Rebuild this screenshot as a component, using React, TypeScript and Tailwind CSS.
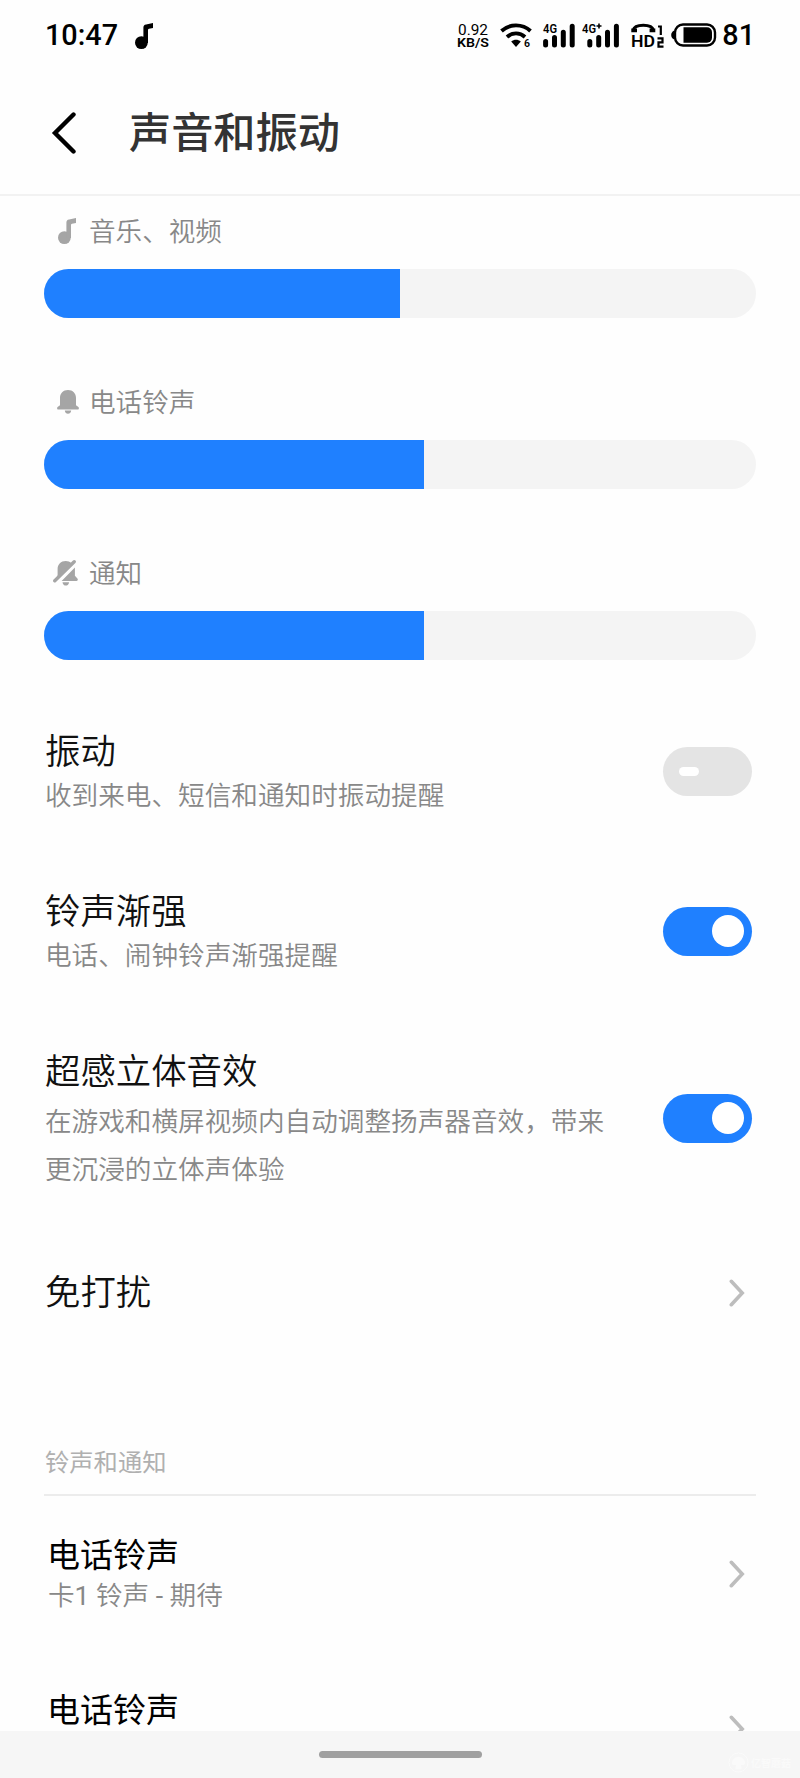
import React from "react";

const NoteIcon: React.FC<{ className?: string }> = ({ className }) => (
  <svg viewBox="0 0 18 26" className={className} fill="currentColor">
    <circle cx="6.4" cy="19.6" r="6.4" />
    <path d="M8.400 20V4.600c0-2 .8-2.900 2.700-3.200L18 0v5l-4 .8c-.7.2-1 .5-1 1.200V20z" />
  </svg>
);

const BellIcon = () => (
  <svg viewBox="0 0 22 24" className="ml-[3px] h-6 w-[22px]" fill="currentColor">
    <path d="M11 0c4.800 0 8 3.400 8 8v7.200l2.400 1.800c.9.900.5 2.400-.7 2.400H1.300c-1.200 0-1.600-1.500-.7-2.400L3 15.200V8c0-4.600 3.200-8 8-8z" />
    <path d="M7.800 20.600h6.400c-.3 2.100-1.600 3.200-3.200 3.200s-2.900-1.100-3.200-3.200z" />
  </svg>
);

const BellOffIcon = () => (
  <svg viewBox="0 0 25 26" className="-ml-[2px] h-[26px] w-[25px]" fill="currentColor">
    <path d="M18.500 3.200C17 1.800 15 1 12.700 1 8 1 4.600 4.300 4.600 9v6.500L3 19z" />
    <path d="M21.900 7.500v8.300l2.500 2.600c.8.900.4 2.600-.8 2.600H8.600z" />
    <path d="M9.500 22.200h6.600c-.3 2.200-1.700 3.400-3.300 3.400s-3-1.200-3.300-3.400z" />
    <path d="M1.800 20.800 21.200 1.800" stroke="currentColor" strokeWidth="3.400" strokeLinecap="round" />
  </svg>
);

const Chevron = () => (
  <svg viewBox="0 0 16 28" className="mr-[11px] h-7 w-4 shrink-0" fill="none">
    <path d="M2.300 2.300 13.200 14 2.300 25.700" stroke="#bdbdbd" strokeWidth="3.600" strokeLinecap="round" />
  </svg>
);

const SignalBars = () => (
  <path
    d="M2.600 19.500V23M11.500 15.500V23M20.300 10.300V23M29.200 4.200V23"
    stroke="#000"
    strokeWidth="5"
    strokeLinecap="round"
  />
);

const StatusBar = () => (
  <div className="flex h-[70px] shrink-0 items-center pl-[45px] pr-[45px] font-[Roboto] text-black">
    <span className="text-[28.8px] font-medium leading-none">10:47</span>
    <NoteIcon className="ml-[17px] mt-[2px] h-[26px] w-[18px]" />
    <div className="ml-auto flex items-center">
      <svg viewBox="0 0 32 26" className="h-[26px] w-8 overflow-visible font-[Roboto]">
        <text x="1" y="13" fontSize="15.500" textLength="30" lengthAdjust="spacingAndGlyphs">0.92</text>
        <text x="0" y="25" fontSize="12.500" fontWeight="600" textLength="32" lengthAdjust="spacingAndGlyphs">KB/S</text>
      </svg>
      <svg viewBox="0 0 32 26" className="ml-[11px] h-[26px] w-8 overflow-visible" fill="none">
        <path d="M1.500 9C9.500 1.500 22.500 1.500 30.500 9" stroke="#000" strokeWidth="3.800" />
        <path d="M7 15c5.200-4.800 12.800-4.800 18 0" stroke="#000" strokeWidth="3.800" />
        <path d="M11.200 19.600c2.900-2.400 6.700-2.400 9.600 0L16 25z" fill="#000" />
        <text x="24" y="25" fontFamily="Roboto" fontSize="10.500" fontWeight="600" fill="#000">6</text>
      </svg>
      <svg viewBox="0 0 33 26" className="ml-[11px] h-[26px] w-[33px] overflow-visible">
        <text x="0" y="10.500" fontFamily="Roboto" fontSize="12" fontWeight="600" textLength="14" lengthAdjust="spacingAndGlyphs">4G</text>
        <SignalBars />
      </svg>
      <svg viewBox="0 0 37 26" className="ml-[6px] h-[26px] w-[37px] overflow-visible">
        <text x="0" y="10.500" fontFamily="Roboto" fontSize="12" fontWeight="600" textLength="14" lengthAdjust="spacingAndGlyphs">4G</text>
        <path d="M14.500 4h5M17 1.500v5" stroke="#000" strokeWidth="1.600" />
        <g transform="translate(5.200 0)">
          <SignalBars />
        </g>
      </svg>
      <svg viewBox="0 0 33 26" className="ml-3 h-[26px] w-[33px] overflow-visible">
        <path d="M2.300 8C3 4.300 7 3.200 12.300 3.200S21.600 4.300 22.300 8" fill="none" stroke="#000" strokeWidth="3" />
        <path d="M.3 6.500h5.700v3.800H.3zM18.600 6.500h5.700v3.800h-5.700z" />
        <text x="0" y="25" fontFamily="Roboto" fontSize="16.500" fontWeight="600" textLength="24" lengthAdjust="spacingAndGlyphs">HD</text>
        <path d="M27 4.500h2.800V13M26.500 16.300h5v4h-4v4.300h5" fill="none" stroke="#000" strokeWidth="2.200" />
      </svg>
      <svg viewBox="0 0 46 24" className="ml-[7px] h-6 w-[46px]">
        <rect x="4" y="1.500" width="40" height="21" rx="8" fill="none" stroke="#000" strokeWidth="2.400" />
        <path d="M3.200 7.500v9C1.200 15.500.2 14 .2 12s1-3.500 3-4.500z" />
        <path d="M12.500 4.300H36a5 5 0 0 1 5 5v5.400a5 5 0 0 1-5 5H12.500z" />
      </svg>
      <span className="ml-[5px] text-[28.8px] font-medium leading-none">81</span>
    </div>
  </div>
);

type VolumeProps = { icon: React.ReactNode; label: string; value: number };

const Volume: React.FC<VolumeProps> = ({ icon, label, value }) => (
  <div className="mb-16">
    <div className="flex h-9 items-center">
      <span className="flex w-[45px] justify-center pt-1 text-[#a5a5a5]">{icon}</span>
      <span className="pt-[2px] text-[26.600px] font-[350] leading-9 text-[#888]">{label}</span>
    </div>
    <div className="mt-[22px] h-[49px] overflow-hidden rounded-full bg-[#f4f4f4]">
      <div className="h-full bg-[#1f80ff]" style={{ width: value }} />
    </div>
  </div>
);

const Toggle: React.FC<{ on: boolean }> = ({ on }) =>
  on ? (
    <div className="mr-1 flex h-[49px] w-[89px] shrink-0 items-center justify-end rounded-full bg-[#1f80ff] pr-2">
      <div className="size-8 rounded-full bg-white" />
    </div>
  ) : (
    <div className="mr-1 flex h-[49px] w-[89px] shrink-0 items-center rounded-full bg-[#e4e4e4] pl-4">
      <div className="h-[9px] w-5 rounded-full bg-white" />
    </div>
  );

type SwitchRowProps = { title: string; lines: string[]; on: boolean };

const SwitchRow: React.FC<SwitchRowProps> = ({ title, lines, on }) => (
  <div className={`flex items-center justify-between pl-px ${lines.length > 1 ? "h-[214px]" : "h-[160px]"}`}>
    <div className={lines.length > 1 ? "pt-[2px]" : "pb-1"}>
      <p className="mb-[5px] text-[35.400px] font-[350] leading-[44px] text-[#111]">{title}</p>
      {lines.map((line) => (
        <p
          key={line}
          className={`whitespace-nowrap text-[26.640px] font-[350] text-[#888] ${lines.length > 1 ? "leading-[48px]" : "leading-9"}`}
        >
          {line}
        </p>
      ))}
    </div>
    <Toggle on={on} />
  </div>
);

const RingtoneRow: React.FC<{ title: string; detail?: React.ReactNode }> = ({ title, detail }) => (
  <div className="flex h-[155px] shrink-0 items-center justify-between pl-[3px]">
    <div className="h-[86px]">
      <p className="text-[33px] leading-[44px] text-black">{title}</p>
      {detail && (
        <p className="ml-px mt-[3px] h-9 font-[Roboto,'Noto_Sans_CJK_SC',sans-serif] text-[26.600px] font-[350] leading-9 text-[#888]">
          {detail}
        </p>
      )}
    </div>
    <Chevron />
  </div>
);

export default function App() {
  return (
    <div
      lang="zh-CN"
      className="flex h-[1778px] w-[800px] flex-col overflow-hidden bg-[#fefefe] font-['Noto_Sans_CJK_SC',sans-serif]"
    >
      <StatusBar />
      <header className="flex h-[126px] shrink-0 items-center border-b-2 border-[#f2f2f2] pl-[51px]">
        <svg viewBox="0 0 26 42" className="mt-[2px] h-[42px] w-[26px]" fill="none">
          <path d="M22.500 2.500 4 21l18.500 18.500" stroke="#000" strokeWidth="4.400" strokeLinecap="round" />
        </svg>
        <h1 className="ml-[52px] pb-1 text-[42.200px] font-medium leading-[60px] text-[#333]">声音和振动</h1>
      </header>

      <main className="flex min-h-0 flex-1 flex-col overflow-hidden px-11 pt-[15px]">
        <section className="shrink-0">
          <Volume icon={<NoteIcon className="h-[26px] w-[18px]" />} label="音乐、视频" value={356} />
          <Volume icon={<BellIcon />} label="电话铃声" value={380} />
          <Volume icon={<BellOffIcon />} label="通知" value={380} />
        </section>

        <section className="-mt-[33px] shrink-0">
          <SwitchRow title="振动" lines={["收到来电、短信和通知时振动提醒"]} on={false} />
          <SwitchRow title="铃声渐强" lines={["电话、闹钟铃声渐强提醒"]} on />
          <SwitchRow
            title="超感立体音效"
            lines={["在游戏和横屏视频内自动调整扬声器音效，带来", "更沉浸的立体声体验"]}
            on
          />
          <div className="flex h-[136px] items-center justify-between pl-px">
            <p className="pb-[6px] text-[35.400px] font-[350] leading-[44px] text-[#111]">免打扰</p>
            <Chevron />
          </div>
        </section>

        <h2 className="mt-[84px] shrink-0 border-b-2 border-[#ececec] pb-[17px] pl-px text-[24.300px] leading-8 text-[#b0b0b0]">
          铃声和通知
        </h2>
        <RingtoneRow
          title="电话铃声"
          detail={
            <>
              卡<span className="font-normal">1</span> 铃声 <span className="font-normal">-</span> 期待
            </>
          }
        />
        <RingtoneRow title="电话铃声" />
      </main>

      <footer className="relative flex h-[47px] shrink-0 justify-center bg-[#f6f6f6] pt-5">
        <div className="h-[7px] w-[163px] rounded-full bg-[#a0a0a0]" />
        <div className="absolute right-[9px] top-[21px] flex items-center gap-[2px] text-[#fafafa]">
          <svg viewBox="0 0 22 22" className="size-[21px]" fill="currentColor">
            <circle cx="11" cy="11" r="10" fill="none" stroke="currentColor" />
            <path d="M4 12a7 7 0 0 1 14 0c-1 2-3 2-4.500 1l1 5h-7l1-5C7 14 5 14 4 12z" />
          </svg>
          <span className="text-[10px] font-bold leading-none">亿智蘑菇</span>
        </div>
      </footer>
    </div>
  );
}
